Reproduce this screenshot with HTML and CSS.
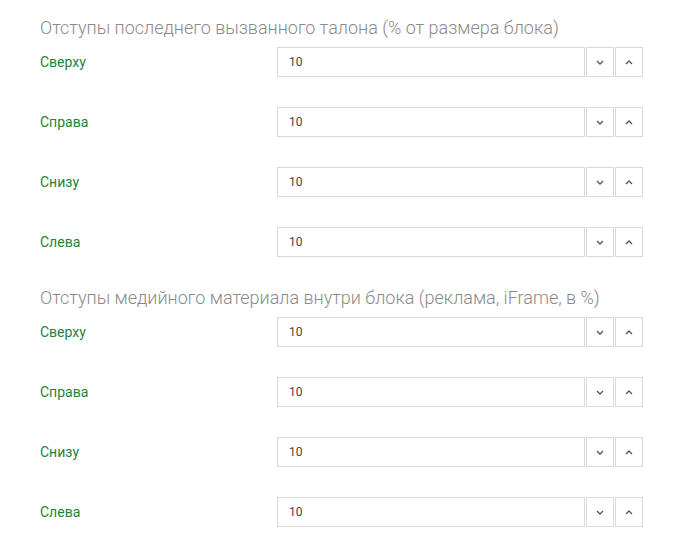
FILE: index.html
```html
<!DOCTYPE html>
<html>
  <head>
    <meta charset="utf-8">
    <title>Отступы</title>
    <link rel="stylesheet" href="styles.css">
  </head>
  <body>
    <section class="group">
      <h2 class="group-title">Отступы последнего вызванного талона (% от размера блока)</h2>
      <div class="field">
        <label class="field-label">Сверху</label>
        <div class="spinner">
          <input class="spinner-input" type="text" value="10">
          <button class="spinner-btn"><svg width="8" height="5" viewBox="0 0 8 5"><path d="M1 1l3 3 3-3"/></svg></button>
          <button class="spinner-btn"><svg width="8" height="5" viewBox="0 0 8 5"><path d="M1 4l3-3 3 3"/></svg></button>
        </div>
      </div>
      <div class="field">
        <label class="field-label">Справа</label>
        <div class="spinner">
          <input class="spinner-input" type="text" value="10">
          <button class="spinner-btn"><svg width="8" height="5" viewBox="0 0 8 5"><path d="M1 1l3 3 3-3"/></svg></button>
          <button class="spinner-btn"><svg width="8" height="5" viewBox="0 0 8 5"><path d="M1 4l3-3 3 3"/></svg></button>
        </div>
      </div>
      <div class="field">
        <label class="field-label">Снизу</label>
        <div class="spinner">
          <input class="spinner-input" type="text" value="10">
          <button class="spinner-btn"><svg width="8" height="5" viewBox="0 0 8 5"><path d="M1 1l3 3 3-3"/></svg></button>
          <button class="spinner-btn"><svg width="8" height="5" viewBox="0 0 8 5"><path d="M1 4l3-3 3 3"/></svg></button>
        </div>
      </div>
      <div class="field">
        <label class="field-label">Слева</label>
        <div class="spinner">
          <input class="spinner-input" type="text" value="10">
          <button class="spinner-btn"><svg width="8" height="5" viewBox="0 0 8 5"><path d="M1 1l3 3 3-3"/></svg></button>
          <button class="spinner-btn"><svg width="8" height="5" viewBox="0 0 8 5"><path d="M1 4l3-3 3 3"/></svg></button>
        </div>
      </div>
    </section>
    <section class="group">
      <h2 class="group-title">Отступы медийного материала внутри блока (реклама, iFrame, в %)</h2>
      <div class="field">
        <label class="field-label">Сверху</label>
        <div class="spinner">
          <input class="spinner-input" type="text" value="10">
          <button class="spinner-btn"><svg width="8" height="5" viewBox="0 0 8 5"><path d="M1 1l3 3 3-3"/></svg></button>
          <button class="spinner-btn"><svg width="8" height="5" viewBox="0 0 8 5"><path d="M1 4l3-3 3 3"/></svg></button>
        </div>
      </div>
      <div class="field">
        <label class="field-label">Справа</label>
        <div class="spinner">
          <input class="spinner-input" type="text" value="10">
          <button class="spinner-btn"><svg width="8" height="5" viewBox="0 0 8 5"><path d="M1 1l3 3 3-3"/></svg></button>
          <button class="spinner-btn"><svg width="8" height="5" viewBox="0 0 8 5"><path d="M1 4l3-3 3 3"/></svg></button>
        </div>
      </div>
      <div class="field">
        <label class="field-label">Снизу</label>
        <div class="spinner">
          <input class="spinner-input" type="text" value="10">
          <button class="spinner-btn"><svg width="8" height="5" viewBox="0 0 8 5"><path d="M1 1l3 3 3-3"/></svg></button>
          <button class="spinner-btn"><svg width="8" height="5" viewBox="0 0 8 5"><path d="M1 4l3-3 3 3"/></svg></button>
        </div>
      </div>
      <div class="field">
        <label class="field-label">Слева</label>
        <div class="spinner">
          <input class="spinner-input" type="text" value="10">
          <button class="spinner-btn"><svg width="8" height="5" viewBox="0 0 8 5"><path d="M1 1l3 3 3-3"/></svg></button>
          <button class="spinner-btn"><svg width="8" height="5" viewBox="0 0 8 5"><path d="M1 4l3-3 3 3"/></svg></button>
        </div>
      </div>
    </section>
  </body>
</html>
```

FILE: styles.css
```css
html {
  box-sizing: border-box;
  background-color: #fff;
}

*, *:before, *:after {
  box-sizing: inherit;
}

body {
  margin: 0;
  padding: 16px 0 0 40px;
  font-family: Roboto, "Noto Sans", sans-serif;
  color: #333;
}

.group {
  display: flex;
  flex-direction: column;
  gap: 30px;
  margin-bottom: 29px;
}

.group-title {
  margin: 0 0 -23px 0;
  font-size: 18px;
  font-weight: 300;
  line-height: 24px;
  color: #8a8a8a;
}

.field {
  display: flex;
  align-items: center;
  height: 30px;
}

.field-label {
  width: 237px;
  font-size: 14px;
  color: #23843a;
}

.spinner {
  display: flex;
  height: 30px;
}

.spinner-input {
  width: 308px;
  height: 30px;
  margin: 0;
  padding: 0 11px;
  border: 1px solid #d9d9d9;
  font-family: inherit;
  font-size: 12px;
  color: #444;
  outline: none;
}

.spinner-btn {
  display: flex;
  align-items: center;
  justify-content: center;
  width: 28px;
  height: 30px;
  margin: 0 0 0 1px;
  padding: 0;
  border: 1px solid #d9d9d9;
  background: #fff;
}

.spinner-btn path {
  fill: none;
  stroke: #555;
  stroke-width: 1.3;
}
```
